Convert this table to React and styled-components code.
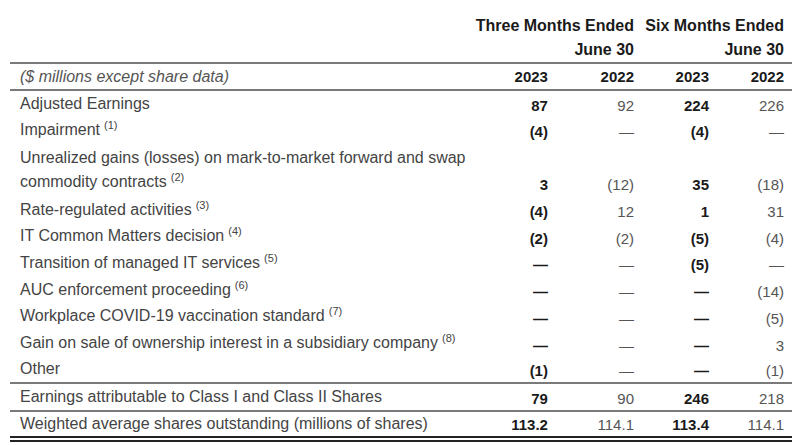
import React from "react"
import styled, { createGlobalStyle } from "styled-components"

const GlobalStyle = createGlobalStyle`
  body {
    margin: 0;
    background: #fff;
    font-family: "Liberation Sans", Arial, sans-serif;
  }
`

const rows = [
  { label: ["Adjusted Earnings"], values: ["87", "92", "224", "226"] },
  { label: ["Impairment"], note: 1, values: ["(4)", "—", "(4)", "—"] },
  {
    label: ["Unrealized gains (losses) on mark-to-market forward and swap", "commodity contracts"],
    note: 2,
    values: ["3", "(12)", "35", "(18)"],
  },
  { label: ["Rate-regulated activities"], note: 3, values: ["(4)", "12", "1", "31"] },
  { label: ["IT Common Matters decision"], note: 4, values: ["(2)", "(2)", "(5)", "(4)"] },
  { label: ["Transition of managed IT services"], note: 5, values: ["—", "—", "(5)", "—"] },
  { label: ["AUC enforcement proceeding"], note: 6, values: ["—", "—", "—", "(14)"] },
  { label: ["Workplace COVID-19 vaccination standard"], note: 7, values: ["—", "—", "—", "(5)"] },
  {
    label: ["Gain on sale of ownership interest in a subsidiary company"],
    note: 8,
    values: ["—", "—", "—", "3"],
  },
  { label: ["Other"], values: ["(1)", "—", "—", "(1)"] },
]

const App = () => {
  return (
    <>
      <GlobalStyle />
      <Wrap>
        <Table>
          <colgroup>
            <col />
            <col style={{ width: 81 }} />
            <col style={{ width: 86 }} />
            <col style={{ width: 75 }} />
            <col style={{ width: 75 }} />
          </colgroup>
          <thead>
            <HeadRow>
              <th />
              <PeriodCell colSpan={2}>Three Months Ended</PeriodCell>
              <PeriodCell colSpan={2}>Six Months Ended</PeriodCell>
            </HeadRow>
            <HeadRow>
              <th />
              <PeriodCell colSpan={2}>June 30</PeriodCell>
              <PeriodCell colSpan={2}>June 30</PeriodCell>
            </HeadRow>
            <YearRow>
              <Caption>($ millions except share data)</Caption>
              <YearCell>2023</YearCell>
              <YearCell>2022</YearCell>
              <YearCell>2023</YearCell>
              <YearCell>2022</YearCell>
            </YearRow>
          </thead>
          <tbody>
            {rows.map((row) => (
              <Row key={row.label[0]} $tall={row.label.length > 1}>
                <Label>
                  {row.label.map((line, i) => (
                    <React.Fragment key={i}>
                      {i > 0 && <br />}
                      {line}
                    </React.Fragment>
                  ))}
                  {row.note && <Note>({row.note})</Note>}
                </Label>
                {row.values.map((v, i) => (
                  <Num key={i} $current={i % 2 === 0}>
                    {v}
                  </Num>
                ))}
              </Row>
            ))}
            <Row $rule>
              <Label>Earnings attributable to Class I and Class II Shares</Label>
              <Num $current>79</Num>
              <Num>90</Num>
              <Num $current>246</Num>
              <Num>218</Num>
            </Row>
            <Row $rule $double>
              <Label>Weighted average shares outstanding (millions of shares)</Label>
              <Num $current>113.2</Num>
              <Num>114.1</Num>
              <Num $current>113.4</Num>
              <Num>114.1</Num>
            </Row>
          </tbody>
        </Table>
      </Wrap>
    </>
  )
}

const Wrap = styled.div`
  padding: 13px 12px 0 10px;
`

const Table = styled.table`
  width: 782px;
  border-collapse: collapse;
  table-layout: fixed;
  font-size: 16px;
  color: #444;
`

const HeadRow = styled.tr`
  height: 25px;
  & th {
    padding: 0;
  }
`

const PeriodCell = styled.th`
  text-align: right;
  font-weight: bold;
  color: #1a1a1a;
  padding: 0 8px 0 0 !important;
  white-space: nowrap;
  vertical-align: middle;
`

const YearRow = styled.tr`
  height: 27px;
  border-top: 2px solid #7a7a7a;
  border-bottom: 2px solid #7a7a7a;
`

const Caption = styled.th`
  text-align: left;
  font-weight: normal;
  font-style: italic;
  color: #555;
  padding: 0 0 0 10px;
`

const YearCell = styled.th`
  text-align: right;
  font-weight: bold;
  font-size: 15px;
  color: #1a1a1a;
  padding: 0 8px 0 0;
`

const Row = styled.tr`
  height: ${(p) => (p.$tall ? "53px" : p.$rule ? "28px" : "26.7px")};
  border-top: ${(p) => (p.$rule ? "2px solid #7a7a7a" : "none")};
  border-bottom: ${(p) => (p.$double ? "6px double #222" : "none")};
`

const Label = styled.td`
  padding: 0 0 0 10px;
  line-height: 24px;
  vertical-align: middle;
  white-space: nowrap;
`

const Note = styled.sup`
  font-size: 11px;
  margin-left: 4px;
  vertical-align: 6px;
  line-height: 0;
`

const Num = styled.td`
  text-align: right;
  padding: 0 8px 3px 0;
  vertical-align: bottom;
  font-size: 15px;
  font-weight: ${(p) => (p.$current ? "bold" : "normal")};
  color: ${(p) => (p.$current ? "#1a1a1a" : "#555")};
  white-space: nowrap;
`

export default App
